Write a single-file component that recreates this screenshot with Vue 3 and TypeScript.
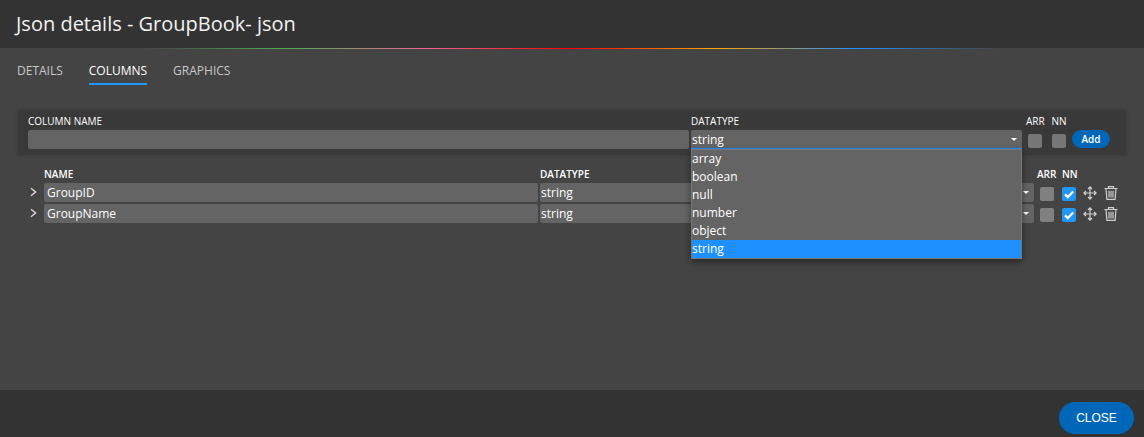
<script setup lang="ts">
import { ref } from 'vue'

interface Column {
  name: string
  datatype: string
  arr: boolean
  nn: boolean
}

const tabs = ['DETAILS', 'COLUMNS', 'GRAPHICS']
const activeTab = ref('COLUMNS')
const types = ['array', 'boolean', 'null', 'number', 'object', 'string']
const selected = ref('string')
const open = ref(true)
const newName = ref('')
const columns = ref<Column[]>([
  { name: 'GroupID', datatype: 'string', arr: false, nn: true },
  { name: 'GroupName', datatype: 'string', arr: false, nn: true },
])

function choose(type: string) {
  selected.value = type
  open.value = false
}

function addColumn() {
  if (!newName.value) return
  columns.value.push({ name: newName.value, datatype: selected.value, arr: false, nn: false })
  newName.value = ''
}
</script>

<template>
  <div class="dialog">
    <header class="title">Json details - GroupBook- json</header>
    <main class="body">
      <div class="rainbow"></div>
      <nav class="tabs">
        <span
          v-for="tab in tabs"
          :key="tab"
          class="tab"
          :class="{ active: tab === activeTab }"
          @click="activeTab = tab"
        >{{ tab }}</span>
      </nav>

      <section class="add-panel">
        <span class="label">COLUMN NAME</span>
        <span class="label">DATATYPE</span>
        <span class="label arr">ARR</span>
        <span class="label nn">NN</span>
        <span></span>
        <input v-model="newName" class="field" />
        <div class="field select focused" @click="open = !open">
          <span>{{ selected }}</span>
          <i class="caret"></i>
          <ul v-if="open" class="menu">
            <li
              v-for="type in types"
              :key="type"
              :class="{ current: type === selected }"
              @click.stop="choose(type)"
            >{{ type }}</li>
          </ul>
        </div>
        <i class="check new-arr"></i>
        <i class="check new-nn"></i>
        <button class="add" @click="addColumn">Add</button>
      </section>

      <section class="table">
        <div class="row head">
          <span></span>
          <span>NAME</span>
          <span>DATATYPE</span>
          <span class="head-arr">ARR</span>
          <span class="head-nn">NN</span>
        </div>
        <div v-for="column in columns" :key="column.name" class="row">
          <svg class="chevron" viewBox="0 0 8 10"><path d="M1 1.2 L5.6 5 L1 8.8" /></svg>
          <div class="field name">{{ column.name }}</div>
          <div class="field select"><span>{{ column.datatype }}</span><i class="caret"></i></div>
          <i class="check" :class="{ on: column.arr }" @click="column.arr = !column.arr"></i>
          <i class="check nn-check" :class="{ on: column.nn }" @click="column.nn = !column.nn">
            <svg v-if="column.nn" viewBox="0 0 14 14"><path d="M3 7.4 L5.8 10.1 L11.2 4.6" /></svg>
          </i>
          <svg class="icon" viewBox="0 0 14 14">
            <path d="M7 1V13M1 7H13M5 3L7 .9L9 3M5 11L7 13.1L9 11M3 5L.9 7L3 9M11 5L13.1 7L11 9" />
          </svg>
          <svg class="icon trash" viewBox="0 0 14 14">
            <path d="M.5 2.5H13.5M4.5 2.4V.6H9.5V2.4M2 2.8L2.9 13.4H11.1L12 2.8M5 4.8V11.5M7 4.8V11.5M9 4.8V11.5" />
          </svg>
        </div>
      </section>
    </main>
    <footer class="footer"><button class="close">CLOSE</button></footer>
  </div>
</template>

<style>
body {
  margin: 0;
  background: #333;
}
</style>

<style scoped>
* {
  box-sizing: border-box;
}
.dialog {
  height: 437px;
  display: flex;
  flex-direction: column;
  overflow: hidden;
  background: #444;
  color: #fff;
  font-family: 'Open Sans', 'Noto Sans', sans-serif;
  font-size: 12px;
}
.title {
  height: 48px;
  flex: none;
  padding-left: 16px;
  background: #333;
  color: #f2f2f2;
  font-size: 20px;
  line-height: 47px;
  white-space: nowrap;
}
.body {
  height: 342px;
  flex: none;
}
.rainbow {
  height: 1px;
  background: linear-gradient(90deg, transparent 12.5%, #4caf50 25%, #f06292 37.5%, #f00 50%, orange 62.5%, #1e90ff 75%, transparent 87.5%);
}
.tabs {
  display: flex;
  gap: 26px;
  padding: 12px 0 0 17px;
}
.tab {
  height: 24px;
  color: #c8c8c8;
  line-height: 20px;
  border-bottom: 2px solid transparent;
}
.tab.active {
  color: #fff;
  border-color: #2196f3;
}
.add-panel {
  height: 45px;
  margin: 25px 18px 0;
  padding: 0 0 0 10px;
  display: grid;
  grid-template-columns: 661px 331px 14px 14px 38px;
  grid-template-rows: 20px 19px;
  column-gap: 2px;
  border-radius: 2px;
  background: #393939;
  box-shadow: 0 0 3px #333;
}
.label {
  font-size: 10px;
  font-weight: 500;
  line-height: 23px;
  color: #fff;
  white-space: nowrap;
}
.label.arr {
  margin-left: 2px;
}
.label.nn {
  margin-left: 11.5px;
}
.field {
  width: 100%;
  height: 19px;
  padding: 0 3px;
  border: 0;
  border-radius: 2px;
  outline: 0;
  background: #646464;
  color: #fff;
  font: 500 12px/20px 'Open Sans', 'Noto Sans', sans-serif;
}
.select {
  position: relative;
  display: flex;
  align-items: flex-start;
  justify-content: space-between;
  padding: 0 5px 0 1px;
}
.focused {
  border-bottom: 1px solid #1e90ff;
  border-radius: 2px 2px 0 0;
}
.caret {
  width: 0;
  height: 0;
  margin-top: 8px;
  border: 3px solid transparent;
  border-top: 3px solid #fff;
  border-bottom: 0;
}
.menu {
  position: absolute;
  z-index: 2;
  top: 19px;
  left: 0;
  width: 331px;
  margin: 0;
  padding: 0;
  list-style: none;
  border: 1px solid #777;
  background: #646464;
  box-shadow: 0 3px 7px rgba(0, 0, 0, 0.45);
}
.menu li {
  height: 18px;
  line-height: 18px;
}
.menu .current {
  background: #1e90ff;
}
.check {
  display: block;
  width: 14px;
  height: 14px;
  border-radius: 2px;
  background: #808080;
}
.check.on {
  background: #2196f3;
}
.check svg {
  display: block;
  fill: none;
  stroke: #fff;
  stroke-width: 2.2;
}
.new-arr,
.new-nn {
  margin: 4px 0 0 4px;
  background: #767676;
}
.new-nn {
  margin-left: 12px;
}
.add {
  width: 38px;
  height: 18px;
  margin-left: 16px;
  padding: 0;
  border: 0;
  border-radius: 9px;
  background: #0067b8;
  color: #fff;
  font: 600 10px/18px 'Open Sans', 'Noto Sans', sans-serif;
}
.table {
  margin: 11px 0 0 28px;
}
.row {
  display: grid;
  grid-template-columns: 14px 494px 494px 14px 14px 14px 14px;
  column-gap: 2px;
  height: 19px;
  margin-bottom: 2px;
}
.row.head {
  height: 17px;
  margin: 0;
  font-size: 10px;
  font-weight: 600;
  line-height: 17px;
}
.head-arr {
  margin-left: 1px;
}
.head-nn {
  margin-left: 10px;
}
.chevron {
  width: 8px;
  height: 10px;
  margin: 4px 0 0 2px;
  fill: none;
  stroke: #d8d8d8;
  stroke-width: 1.4;
}
.row > .check {
  margin: 4px 0 0 4px;
}
.row > .nn-check {
  margin-left: 10px;
}
.icon {
  width: 14px;
  height: 14px;
  margin: 3px 0 0 15px;
  fill: none;
  stroke: #d0d0d0;
  stroke-width: 1.2;
}
.trash {
  margin-left: 20px;
}
.footer {
  height: 47px;
  flex: none;
  display: flex;
  justify-content: flex-end;
  padding: 12px 10px 0 0;
  background: #333;
}
.close {
  width: 75px;
  height: 32px;
  padding: 0;
  border: 0;
  border-radius: 16px;
  background: #0067b8;
  color: #fff;
  font: 12px/32px 'Liberation Sans', sans-serif;
}
</style>
